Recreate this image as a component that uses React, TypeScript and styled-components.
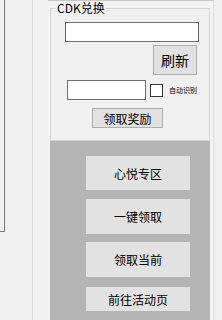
import React from "react";
import styled, { createGlobalStyle } from "styled-components";

const GlobalStyle = createGlobalStyle`
  html, body {
    margin: 0;
    padding: 0;
    background: #f0f0f0;
  }
  body {
    font-family: "Noto Sans CJK SC", "DejaVu Sans", sans-serif;
    color: #000;
  }
`;

const actions = [
  { label: "心悦专区", h: 34, mt: 15 },
  { label: "一键领取", h: 35, mt: 9 },
  { label: "领取当前", h: 35, mt: 8 },
  { label: "前往活动页", h: 24, mt: 10 },
];

function App() {
  return (
    <>
      <GlobalStyle />
      <Page>
        <LeftPane />
        <Gutter />
        <Main>
          <GroupBox>
            <Legend>CDK兑换</Legend>
            <CodeInput />
            <GreyButton $w={44} $h={30} $ml={102} $mt={3} $fs={14}>
              刷新
            </GreyButton>
            <CaptchaRow>
              <CaptchaInput />
              <Check />
              <CheckLabel>自动识别</CheckLabel>
            </CaptchaRow>
            <GreyButton $w={71} $h={20} $ml={41} $mt={8} $fs={12}>
              领取奖励
            </GreyButton>
          </GroupBox>
          <ActionPanel>
            {actions.map((a) => (
              <ActionButton key={a.label} $h={a.h} $mt={a.mt}>
                {a.label}
              </ActionButton>
            ))}
          </ActionPanel>
        </Main>
      </Page>
    </>
  );
}

const Page = styled.div`
  display: flex;
  align-items: flex-start;
  width: 222px;
  height: 320px;
  overflow: hidden;
  background: #f0f0f0;
`;
const LeftPane = styled.div`
  width: 4px;
  height: 231px;
  border-right: 1px solid #7a7a7a;
  border-bottom: 1px solid #7a7a7a;
  background: #f0f0f0;
`;
const Gutter = styled.div`
  width: 27px;
  height: 320px;
  border-right: 1px solid #dcdcdc;
`;
const Main = styled.div`
  display: flex;
  flex-direction: column;
  margin-left: 15px;
  width: 163px;
  height: 319px;
  padding-left: 2px;
  border-top: 1px solid #c8c8c8;
  border-right: 1px solid #dcdcdc;
  background: #f3f3f3;
`;
const GroupBox = styled.fieldset`
  display: flex;
  flex-direction: column;
  align-items: flex-start;
  margin: 0;
  padding: 0 0 12px 0;
  min-width: 0;
  width: 160px;
  box-sizing: border-box;
  border: 1px solid #d5d5d5;
  background: #f0f0f0;
`;
const Legend = styled.legend`
  margin-left: 5px;
  padding: 0 1px;
  height: 14px;
  line-height: 14px;
  font-size: 12px;
`;
const CodeInput = styled.input`
  box-sizing: border-box;
  margin: 7px 0 0 14px;
  width: 134px;
  height: 20px;
  border: 1px solid #6e6e6e;
  background: #fff;
  padding: 0;
`;
const GreyButton = styled.button<{
  $w: number;
  $h: number;
  $ml: number;
  $mt: number;
  $fs: number;
}>`
  box-sizing: border-box;
  margin: ${(p) => p.$mt}px 0 0 ${(p) => p.$ml}px;
  width: ${(p) => p.$w}px;
  height: ${(p) => p.$h}px;
  padding: 0;
  border: 1px solid #adadad;
  background: #e1e1e1;
  font-family: inherit;
  font-size: ${(p) => p.$fs}px;
  color: #000;
`;
const CaptchaRow = styled.div`
  display: flex;
  align-items: center;
  margin-top: 5px;
  height: 20px;
`;
const CaptchaInput = styled.input`
  box-sizing: border-box;
  margin: 0 0 0 16px;
  width: 79px;
  height: 20px;
  border: 1px solid #6e6e6e;
  background: #fff;
  padding: 0;
`;
const Check = styled.span`
  box-sizing: border-box;
  margin-left: 4px;
  width: 13px;
  height: 13px;
  border: 1px solid #333;
  background: #fff;
`;
const CheckLabel = styled.span`
  margin-left: 6px;
  font-size: 7px;
  white-space: nowrap;
`;
const ActionPanel = styled.div`
  display: flex;
  flex-direction: column;
  width: 160px;
  flex: 1;
  padding-left: 36px;
  box-sizing: border-box;
  background: #b4b4b4;
`;
const ActionButton = styled.button<{ $h: number; $mt: number }>`
  box-sizing: border-box;
  margin-top: ${(p) => p.$mt}px;
  width: 104px;
  height: ${(p) => p.$h}px;
  padding: 0;
  border: none;
  background: #e2e2e2;
  font-family: inherit;
  font-size: 12px;
  color: #000;
`;

export default App;
